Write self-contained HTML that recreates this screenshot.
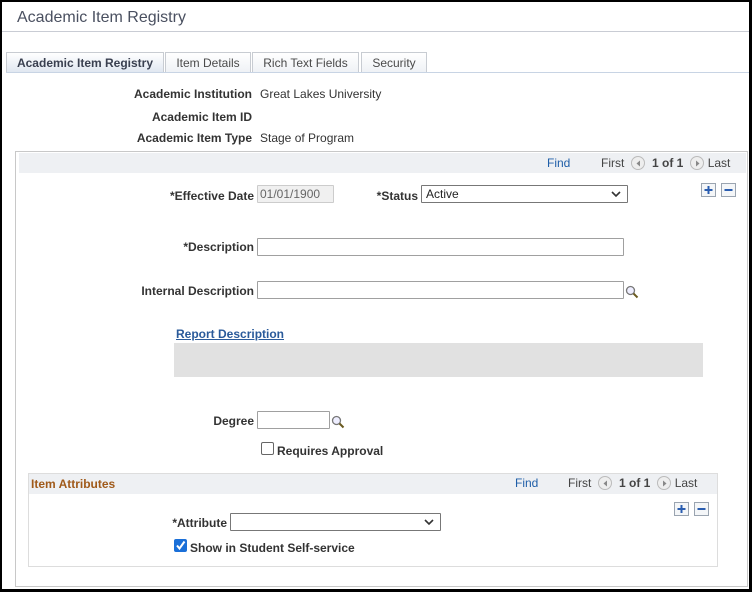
<!DOCTYPE html>
<html><head><style>
*{box-sizing:border-box;margin:0;padding:0}
body{width:752px;height:592px;background:#000;position:relative;overflow:hidden;font-family:"Liberation Sans",Arial,sans-serif;font-size:12px;color:#333}
#pg{position:absolute;left:2px;top:2px;width:747px;height:587px;background:#fff}
.a{position:absolute;white-space:nowrap}
.lb{font-weight:bold;color:#333;text-align:right}
.in{position:absolute;border:1px solid #a0a0a0;background:#fff;height:18px;border-radius:1px}
.tab{position:absolute;top:50px;height:21px;border:1px solid #c8ccd2;border-bottom:none;background:linear-gradient(#fff,#eef1f5);color:#4a4a4a;font-size:12px;text-align:center;line-height:20px}
.lk{color:#1f5ea8}
.btn{position:absolute;width:15px;height:14px;border:1px solid #9aa4b0;background:#f4f6f8}
.arr{display:inline-block;width:14px;height:14px;border:1px solid #bbb;border-radius:50%;background:#eee;vertical-align:-3px;position:relative;margin:0 4px 0 3px}
.arr svg{position:absolute;left:3px;top:3px}
</style></head><body><div id="pg">
<div class="a" style="left:15px;top:7px;font-size:16px;color:#4a5060">Academic Item Registry</div>
<div class="a" style="left:0;top:29px;width:747px;height:1px;background:#c9ccd4"></div>
<div class="tab" style="left:4px;width:158px;font-weight:bold;background:linear-gradient(#fff,#dfe6f0);color:#3a4050">Academic Item Registry</div>
<div class="tab" style="left:163px;width:86px">Item Details</div>
<div class="tab" style="left:250px;width:107px">Rich Text Fields</div>
<div class="tab" style="left:359px;width:66px">Security</div>
<div class="a" style="left:4px;top:70px;width:743px;height:1px;background:#c8d4e4"></div>
<div class="a lb" style="left:60px;width:190px;top:85px">Academic Institution</div>
<div class="a" style="left:258px;top:85px">Great Lakes University</div>
<div class="a lb" style="left:60px;width:190px;top:108px">Academic Item ID</div>
<div class="a lb" style="left:60px;width:190px;top:129px">Academic Item Type</div>
<div class="a" style="left:258px;top:129px">Stage of Program</div>
<div class="a" style="left:13px;top:149px;width:733px;height:436px;border:1px solid #c8c8c8"></div>
<div class="a" style="left:17px;top:151px;width:727px;height:20px;background:#eef0f3"></div>
<div class="a lk" style="left:545px;top:154px">Find</div>
<div class="a" style="left:599px;top:154px;color:#444">First <span class="arr"><svg width="7" height="7"><path d="M5 0.5L1.5 3.5 5 6.5z" fill="#888"/></svg></span> <b>1 of 1</b> <span class="arr"><svg width="7" height="7"><path d="M2 0.5L5.5 3.5 2 6.5z" fill="#888"/></svg></span>Last</div>
<div class="btn" style="left:699px;top:181px"><svg width="13" height="12"><path d="M6.5 2v8M2.5 6h8" stroke="#2a5db0" stroke-width="2"/></svg></div>
<div class="btn" style="left:719px;top:181px"><svg width="13" height="12"><path d="M2.5 6h8" stroke="#2a5db0" stroke-width="2"/></svg></div>
<div class="a lb" style="left:60px;width:192px;top:187px">*Effective Date</div>
<div class="in" style="left:255px;top:183px;width:77px;background:#f0f0f0;border-color:#ccc;color:#666;padding-left:2px;line-height:16px">01/01/1900</div>
<div class="a lb" style="left:360px;width:56px;top:187px">*Status</div>
<div class="in" style="left:419px;top:183px;width:207px;border-color:#777;padding-left:4px;line-height:16px;color:#222">Active<svg style="position:absolute;right:6px;top:5px" width="10" height="7"><path d="M1 1l4 4 4-4" stroke="#333" stroke-width="1.6" fill="none"/></svg></div>
<div class="a lb" style="left:60px;width:192px;top:238px">*Description</div>
<div class="in" style="left:255px;top:236px;width:367px"></div>
<div class="a lb" style="left:60px;width:192px;top:282px">Internal Description</div>
<div class="in" style="left:255px;top:279px;width:367px"></div>
<svg class="a" style="left:623px;top:283px" width="14" height="14"><circle cx="5.5" cy="5.5" r="4" fill="#eef" stroke="#777" stroke-width="1.3"/><path d="M8.5 8.5l4 4" stroke="#6a5a20" stroke-width="2"/></svg>
<div class="a" style="left:174px;top:325px;font-weight:bold;color:#2a5a9a;text-decoration:underline">Report Description</div>
<div class="a" style="left:172px;top:341px;width:529px;height:34px;background:#e1e1e1"></div>
<div class="a lb" style="left:60px;width:192px;top:412px">Degree</div>
<div class="in" style="left:255px;top:409px;width:73px"></div>
<svg class="a" style="left:329px;top:413px" width="14" height="14"><circle cx="5.5" cy="5.5" r="4" fill="#eef" stroke="#777" stroke-width="1.3"/><path d="M8.5 8.5l4 4" stroke="#6a5a20" stroke-width="2"/></svg>
<div class="a" style="left:259px;top:440px;width:13px;height:13px;border:1px solid #666;border-radius:2px"></div>
<div class="a" style="left:275px;top:442px;font-weight:bold">Requires Approval</div>
<div class="a" style="left:26px;top:471px;width:690px;height:94px;border:1px solid #ddd"></div>
<div class="a" style="left:27px;top:472px;width:688px;height:20px;background:#eef0f3"></div>
<div class="a" style="left:29px;top:475px;font-weight:bold;color:#a05a1a">Item Attributes</div>
<div class="a lk" style="left:513px;top:474px">Find</div>
<div class="a" style="left:566px;top:474px;color:#444">First <span class="arr"><svg width="7" height="7"><path d="M5 0.5L1.5 3.5 5 6.5z" fill="#888"/></svg></span> <b>1 of 1</b> <span class="arr"><svg width="7" height="7"><path d="M2 0.5L5.5 3.5 2 6.5z" fill="#888"/></svg></span>Last</div>
<div class="btn" style="left:672px;top:500px"><svg width="13" height="12"><path d="M6.5 2v8M2.5 6h8" stroke="#2a5db0" stroke-width="2"/></svg></div>
<div class="btn" style="left:692px;top:500px"><svg width="13" height="12"><path d="M2.5 6h8" stroke="#2a5db0" stroke-width="2"/></svg></div>
<div class="a lb" style="left:120px;width:105px;top:514px">*Attribute</div>
<div class="in" style="left:228px;top:511px;width:211px;border-color:#777"><svg style="position:absolute;right:6px;top:5px" width="10" height="7"><path d="M1 1l4 4 4-4" stroke="#333" stroke-width="1.6" fill="none"/></svg></div>
<div class="a" style="left:172px;top:537px;width:13px;height:13px;background:#1a6fd8;border-radius:2px"><svg width="13" height="13"><path d="M3 6.5l2.5 3 5-7" stroke="#fff" stroke-width="2" fill="none"/></svg></div>
<div class="a" style="left:188px;top:539px;font-weight:bold">Show in Student Self-service</div>
</div></body></html>
